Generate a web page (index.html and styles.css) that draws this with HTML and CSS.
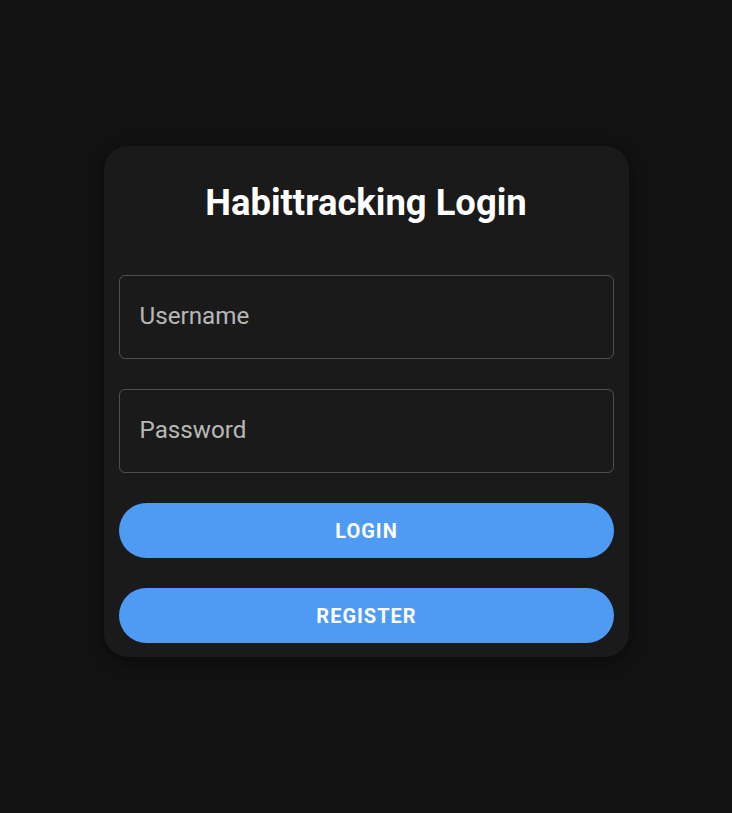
FILE: index.html
```html
<!DOCTYPE html>
<html lang="en">
<head>
<meta charset="utf-8">
<title>Habittracking Login</title>
<link rel="stylesheet" href="styles.css">
</head>
<body>
<main class="page">
  <form class="card">
    <h1 class="title">Habittracking Login</h1>
    <div class="fields">
      <input class="field" type="text" placeholder="Username">
      <input class="field" type="password" placeholder="Password">
    </div>
    <div class="actions">
      <button class="btn" type="button">Login</button>
      <button class="btn" type="button">Register</button>
    </div>
  </form>
</main>
</body>
</html>
```
FILE: styles.css
```css
* { box-sizing: border-box; }
html, body { margin: 0; padding: 0; }
body {
  background: #121212;
  font-family: Roboto, "Noto Sans", sans-serif;
  color: #fff;
  min-height: 813px;
}
.page {
  display: flex;
  justify-content: center;
  padding-top: 146px;
}
.card {
  width: 525px;
  background: #1a1a1a;
  border-radius: 24px;
  padding: 0 15px 14px;
  box-shadow: 0 4px 16px rgba(0,0,0,0.45);
  display: flex;
  flex-direction: column;
}
.title {
  margin: 36px 0 0;
  text-align: center;
  font-size: 36.4px;
  font-weight: 700;
  line-height: 42px;
  color: #fff;
}
.fields {
  display: flex;
  flex-direction: column;
  gap: 30px;
  margin-top: 51px;
}
.field {
  height: 84px;
  width: 100%;
  background: transparent;
  border: 1px solid rgba(255,255,255,0.23);
  border-radius: 6px;
  padding: 0 20px 2px 20px;
  font-family: Roboto, sans-serif;
  font-size: 24.2px;
  color: #fff;
  outline: none;
}
.field::placeholder { color: rgba(255,255,255,0.7); opacity: 1; }
.actions {
  display: flex;
  flex-direction: column;
  gap: 30px;
  margin-top: 30px;
}
.btn {
  height: 55px;
  border: none;
  border-radius: 28px;
  background: #4e9bf4;
  color: #fff;
  font-family: Roboto, sans-serif;
  font-weight: 700;
  font-size: 20px;
  text-transform: uppercase;
  letter-spacing: 1px;
  padding: 0 0 0 1px;
  cursor: pointer;
}
```
